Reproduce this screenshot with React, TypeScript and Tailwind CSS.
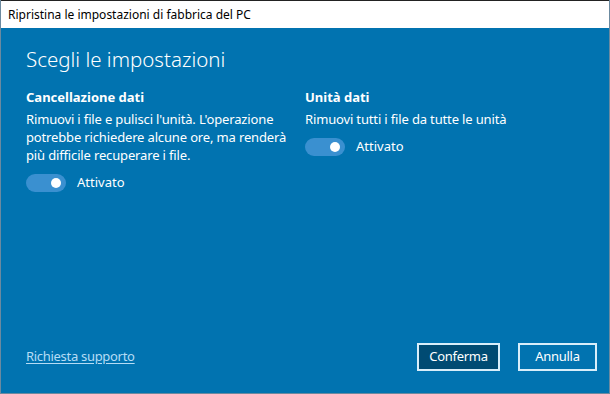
import React from "react";

const Toggle = ({ label }: { label: string }) => (
  <div className="flex items-center gap-[11px]">
    <div className="w-[40px] h-[18px] rounded-full bg-[#3a90d0] flex items-center justify-end pr-[5px]">
      <div className="w-[10px] h-[10px] rounded-full bg-white" />
    </div>
    <span className="text-[13px] text-white">{label}</span>
  </div>
);

export default function App() {
  return (
    <div
      className="w-[610px] h-[394px] flex flex-col bg-[#0173b0] border-x border-b border-[#6b8aa0]"
      style={{ fontFamily: '"Noto Sans", "Open Sans", sans-serif' }}
    >
      <div className="h-[28px] shrink-0 bg-white border-t border-[#222] flex items-center pl-[7px] text-[12px] text-black">
        Ripristina le impostazioni di fabbrica del PC
      </div>
      <div className="flex-1 flex flex-col pl-[25px] pr-[12px] pt-[17px] pb-[22px] text-white">
        <h1 className="text-[20.5px] font-light leading-[28px]">Scegli le impostazioni</h1>
        <div className="flex mt-[15px]">
          <div className="w-[279px] flex flex-col">
            <div className="text-[13px] font-bold leading-[18px]">Cancellazione dati</div>
            <p className="text-[13px] leading-[18px] mt-[4px] tracking-[-0.15px]">
              Rimuovi i file e pulisci l'unità. L'operazione potrebbe richiedere alcune ore, ma renderà più difficile recuperare i file.
            </p>
            <div className="mt-[9px]">
              <Toggle label="Attivato" />
            </div>
          </div>
          <div className="flex flex-col">
            <div className="text-[13px] font-bold leading-[18px]">Unità dati</div>
            <p className="text-[13px] leading-[18px] mt-[4px] tracking-[-0.15px]">Rimuovi tutti i file da tutte le unità</p>
            <div className="mt-[9px]">
              <Toggle label="Attivato" />
            </div>
          </div>
        </div>
        <div className="mt-auto flex items-center">
          <a className="text-[13px] text-[#b6dcf5] underline underline-offset-2 tracking-[-0.3px]">Richiesta supporto</a>
          <div className="ml-auto flex gap-[18px]">
            <button className="w-[83px] h-[28px] border-2 border-[#d8eefa] bg-[#004b73] text-[13px] text-white tracking-[-0.3px]">
              Conferma
            </button>
            <button className="w-[79px] h-[28px] border-2 border-[#d8eefa] bg-[#0173b0] text-[13px] text-white tracking-[-0.3px]">
              Annulla
            </button>
          </div>
        </div>
      </div>
    </div>
  );
}
